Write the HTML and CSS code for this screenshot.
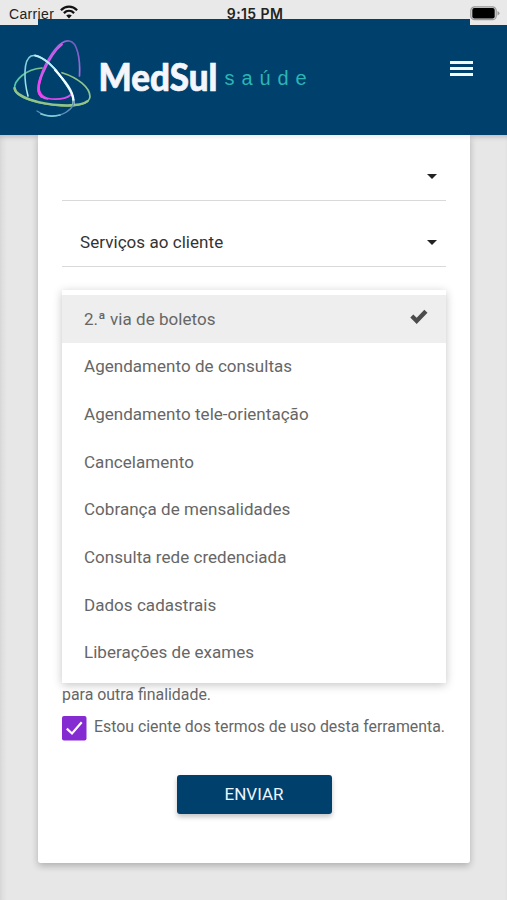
FILE: index.html
```html
<!DOCTYPE html>
<html lang="pt-BR">
<head>
<meta charset="utf-8">
<title>MedSul saúde</title>
<link rel="stylesheet" href="styles.css">
</head>
<body>
<div class="status">
  <div class="carrier"><span>Carrier</span>
    <svg width="18" height="14" viewBox="0 0 18 14" fill="none" stroke="#111" stroke-width="2.3"><path d="M.9 5.2C5.6.5 12.400.5 17.100 5.200M3.900 8.100c3-2.900 7.200-2.900 10.200 0"/><path d="M9 13.500 6.200 10.600q2.800-2.200 5.600 0z" fill="#111" stroke="none"/></svg>
  </div>
  <span class="clock">9:15 PM</span>
  <svg class="battery" width="30" height="15" viewBox="0 0 30 15"><rect x=".8" y=".8" width="25.400" height="12.900" rx="3.800" fill="#ddd" stroke="#999" stroke-width="1.200"/><rect x="2.300" y="2" width="22.400" height="10.500" rx="2" fill="#000"/><path d="M27.500 5v4.500q2-.7 2-2.200t-2-2.300" fill="#999"/></svg>
</div>
<header class="header">
  <svg class="symbol" width="80" height="80" viewBox="12 38 80 80" fill="none" stroke-linecap="round">
    <defs>
      <linearGradient id="violet" x1="0" y1="1" x2="1" y2="0"><stop stop-color="#f03cf0"/><stop offset=".35" stop-color="#d94df0"/><stop offset=".75" stop-color="#a56bdc"/><stop offset="1" stop-color="#5b55b0"/></linearGradient>
      <linearGradient id="lime" x1="0" y1="0" x2="1" y2="0"><stop stop-color="#4fc5b0"/><stop offset=".45" stop-color="#8fbf76"/><stop offset="1" stop-color="#8fc591"/></linearGradient>
      <linearGradient id="ice" x1="0" y1="0" x2="1" y2="1"><stop stop-color="#79c9d9"/><stop offset=".35" stop-color="#9ce4e4"/><stop offset=".65" stop-color="#f2ffff"/><stop offset="1" stop-color="#b9a5ef"/></linearGradient>
    </defs>
    <path d="M42 68C26 69 14 80 14.500 89c1 9 25 15.500 47 16.700 16 .8 28-2 28.500-9 0-9-12-19-28-24" stroke="url(#lime)" stroke-width="1.700"/>
    <path d="M14.500 88c1 9 25 16 47 17.200 12 .5 22-.6 26-4" stroke="#92c488" stroke-width="2.400"/>
    <path d="M79.500 76C80.500 58 77 42 69.500 41c-9-2-20 14-27 30-7 17-4 27 9 28 8 .5 15-.5 19-4" stroke="url(#violet)" stroke-width="1.700"/>
    <path d="M62 44.500c-8 6-14 17-19.500 29.500-5 12-6 19-1 22.500 2 1.600 4 2.200 6 2.400" stroke="#c85fe9" stroke-width="1.900"/>
    <path d="M40.500 78c-3 9-3 15 1 18.500" stroke="#ee43f2" stroke-width="2.600"/>
    <path d="M28 96c-4-15-5-36 3-40 8-3 21 8 30 21 8 11 14 20 12.500 27" stroke="url(#ice)" stroke-width="1.600"/>
    <path d="M35 55.500c9 2 19 11 26 21.500 8 11 13 18 12.500 27" stroke="#b9edf5" stroke-width="2"/>
    <path d="M55 70c11 12 18 21 18.500 30" stroke="#f2ffff" stroke-width="2"/>
    <path d="M74 101c0 6-6 11-14 14-9 3-17 0-23-4" stroke="#5f8cba" stroke-width="1.300"/>
    <path d="M41 114c6 2.500 13 2.500 19 1" stroke="#79d0d1" stroke-width="1.700"/>
  </svg>
  <svg class="wordmark" width="215" height="40" viewBox="98 56 215 40">
    <text class="brand" x="98.500" y="91" textLength="119" lengthAdjust="spacingAndGlyphs">MedSul</text>
    <text class="tagline" x="224.500" y="85" textLength="82">saúde</text>
  </svg>
  <div class="burger"><i></i><i></i><i></i></div>
</header>
<main class="page">
  <section class="card">
    <div class="select"><span></span><i class="caret"></i></div>
    <div class="select"><span>Serviços ao cliente</span><i class="caret"></i></div>
    <ul class="menu">
      <li class="selected"><span>2.ª via de boletos</span><svg width="18" height="16" viewBox="0 0 18 16"><path d="M.3 8.600 3.300 5.600 6.700 8.700 14.300.700 17.500 3.700 6.700 15z" fill="#4c4c4c"/></svg></li>
      <li>Agendamento de consultas</li>
      <li>Agendamento tele-orientação</li>
      <li>Cancelamento</li>
      <li>Cobrança de mensalidades</li>
      <li>Consulta rede credenciada</li>
      <li>Dados cadastrais</li>
      <li>Liberações de exames</li>
    </ul>
    <p class="note">para outra finalidade.</p>
    <label class="terms"><svg width="25" height="25" viewBox="0 0 25 25"><rect width="24.500" height="24.500" rx="2" fill="#842bd2"/><path d="M4.800 12.600 10 17.500 19.700 6.300" fill="none" stroke="#fff" stroke-width="2.200"/></svg><span>Estou ciente dos termos de uso desta ferramenta.</span></label>
    <button class="submit">ENVIAR</button>
  </section>
</main>
</body>
</html>
```

FILE: styles.css
```css
* { box-sizing: border-box; }
body { margin: 0; width: 507px; height: 900px; overflow: hidden; background: #e7e7e7; font-family: Roboto, sans-serif; color: #666; }
.status { height: 25px; display: grid; grid-template-columns: 1fr auto 1fr; align-items: start; padding: 6px 7px 0 9px; font: 14px/16px "Liberation Sans", sans-serif; color: #222; background: #e9e9e9; }
.carrier { display: flex; gap: 6px; letter-spacing: .35px; }
.carrier svg { margin-top: -1px; }
.clock { font: 600 14px/16px Inter, sans-serif; letter-spacing: .4px; margin-right: -1px; }
.battery { justify-self: end; }
.header { position: relative; z-index: 2; height: 116px; margin-top: -6px; padding: 19px 34px 0 12px; display: flex; align-items: flex-start; background: #00406c; clip-path: polygon(0 6px, 38px 6px, 38px 0, 470px 0, 470px 6px, 507px 6px, 507px 116px, 0 116px); }
.wordmark { margin: 18px 0 0 6px; overflow: visible; }
.brand { font: 900 37px Lato, sans-serif; fill: #f4f6fc; stroke: #f4f6fc; stroke-width: .7px; }
.tagline { font: 20px "Liberation Sans", sans-serif; fill: #2cb5b5; }
.burger { margin: 22.500px 0 0 auto; width: 23px; display: grid; gap: 3.300px; }
.burger i { height: 3px; background: #f5faff; }
.page { height: 765px; padding: 0 37px 0 38px; background: linear-gradient(to right, #dadada, #e7e7e7 7px); box-shadow: inset 0 5px 5px -3px #bbb; }
.card { height: 728px; padding: 0 24px; background: linear-gradient(#eef0f4, #fff 5px); border-radius: 0 0 3px 3px; box-shadow: 0 3px 7px rgba(0,0,0,.24); display: flex; flex-direction: column; }
.select { height: 66px; flex: none; padding: 16px 9px 0 18px; border-bottom: 1px solid #d9d9d9; display: flex; align-items: center; justify-content: space-between; color: #333; font-size: 17px; letter-spacing: .05px; }
.caret { margin-top: 2px; border: 5px solid transparent; border-top-color: #222; border-bottom: 0; }
.menu { list-style: none; margin: 23px 0 0; padding: 5px 0 6px; height: 393px; flex: none; background: #fff; box-shadow: 0 2px 9px rgba(0,0,0,.23); font-size: 17px; letter-spacing: .04px; }
.menu li { height: 47.650px; padding: 0 18px 0 22px; display: flex; align-items: center; justify-content: space-between; }
.menu .selected { background: #eee; }
.menu .selected svg { margin-top: -4px; }
.note { margin: 0; height: 33px; padding-top: 2px; font-size: 15.900px; line-height: 20px; }
.terms { display: flex; gap: 7px; height: 25px; font-size: 15.850px; line-height: 22px; white-space: nowrap; }
.terms svg { flex: none; }
.submit { align-self: center; margin-top: 34px; padding: 0 0 2px; width: 155px; height: 39px; border: 0; border-radius: 3px; background: #00406c; color: #edf5ff; font: 17px Roboto, sans-serif; box-shadow: 0 3px 5px rgba(0,0,0,.23); }
```
